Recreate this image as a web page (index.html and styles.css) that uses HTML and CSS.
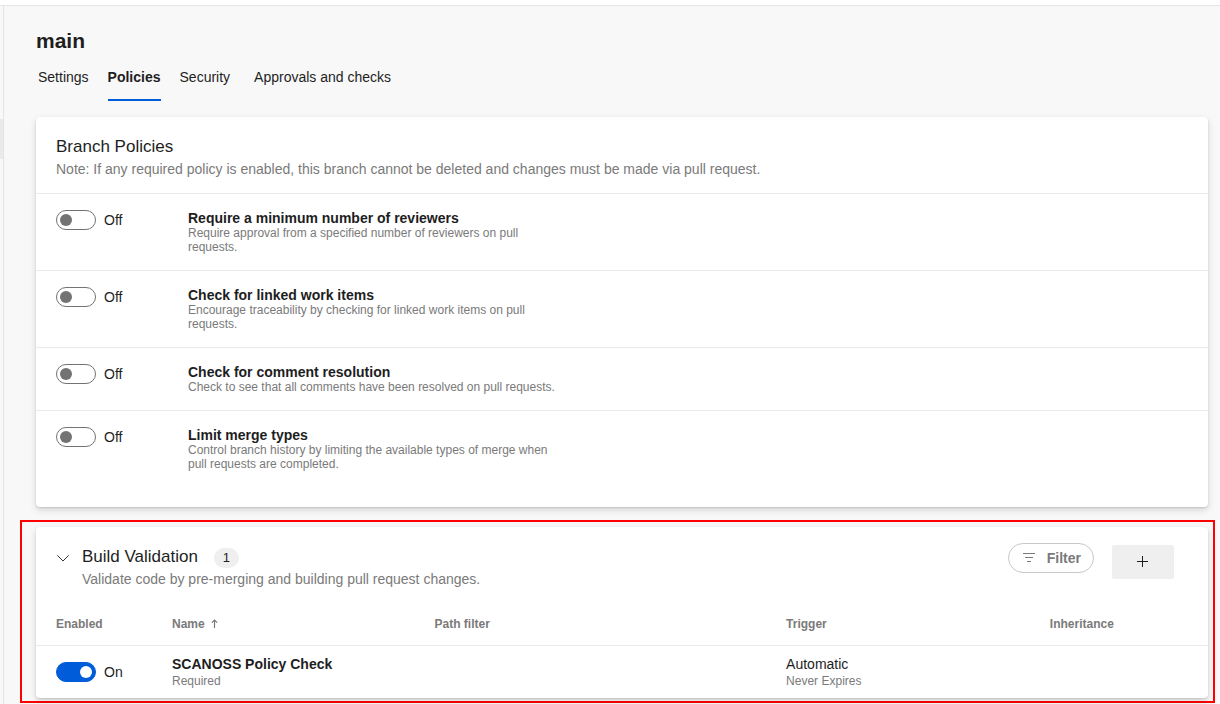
FILE: index.html
```
<!DOCTYPE html>
<html lang="en">
<head>
<meta charset="utf-8">
<title>main - Branch policies</title>
<link rel="stylesheet" href="styles.css">
</head>
<body>
<div class="topbar"></div>
<div class="shell">
  <aside class="rail"><div class="rail-selected"></div></aside>
  <main class="content">
    <h1 class="page-title">main</h1>
    <nav class="tabs">
      <a class="tab" href="#settings">Settings</a>
      <a class="tab tab-active" href="#policies" aria-current="page">Policies</a>
      <a class="tab" href="#security">Security</a>
      <a class="tab tab-last" href="#approvals">Approvals and checks</a>
    </nav>

    <section class="card card-branch">
      <header class="card-header">
        <div>
          <h2 class="card-title">Branch Policies</h2>
          <p class="card-note">Note: If any required policy is enabled, this branch cannot be deleted and changes must be made via pull request.</p>
        </div>
      </header>
      <div class="policy">
        <label class="switch"><input class="toggle" type="checkbox" role="switch" aria-describedby="p1"><span>Off</span></label>
        <div class="policy-text">
          <h3 class="item-title" id="p1">Require a minimum number of reviewers</h3>
          <p class="policy-note">Require approval from a specified number of reviewers on pull requests.</p>
        </div>
      </div>
      <div class="policy">
        <label class="switch"><input class="toggle" type="checkbox" role="switch" aria-describedby="p2"><span>Off</span></label>
        <div class="policy-text">
          <h3 class="item-title" id="p2">Check for linked work items</h3>
          <p class="policy-note">Encourage traceability by checking for linked work items on pull requests.</p>
        </div>
      </div>
      <div class="policy">
        <label class="switch"><input class="toggle" type="checkbox" role="switch" aria-describedby="p3"><span>Off</span></label>
        <div class="policy-text">
          <h3 class="item-title" id="p3">Check for comment resolution</h3>
          <p class="policy-note">Check to see that all comments have been resolved on pull requests.</p>
        </div>
      </div>
      <div class="policy">
        <label class="switch"><input class="toggle" type="checkbox" role="switch" aria-describedby="p4"><span>Off</span></label>
        <div class="policy-text">
          <h3 class="item-title" id="p4">Limit merge types</h3>
          <p class="policy-note">Control branch history by limiting the available types of merge when pull requests are completed.</p>
        </div>
      </div>
    </section>

    <div class="highlight">
      <section class="card">
        <header class="card-header">
          <button class="collapse" type="button" aria-label="Collapse Build Validation" aria-expanded="true">
            <svg width="14" height="14" viewBox="0 0 14 14" fill="none" stroke="currentColor"><path d="M1.300 4.300 7 10l5.700-5.700"/></svg>
          </button>
          <div class="header-text">
            <div class="title-line">
              <h2 class="card-title">Build Validation</h2>
              <span class="count">1</span>
            </div>
            <p class="card-note">Validate code by pre-merging and building pull request changes.</p>
          </div>
          <div class="actions">
            <button class="filter" type="button">
              <svg width="12" height="10" viewBox="0 0 12 10" fill="none" stroke="currentColor"><path d="M0 .5h12M2 4.500h8M4 8.500h4"/></svg>
              <span>Filter</span>
            </button>
            <button class="add" type="button" aria-label="Add build policy">
              <svg width="11" height="11" viewBox="0 0 11 11" fill="none" stroke="currentColor"><path d="M0 5.500h11M5.500 0v11"/></svg>
            </button>
          </div>
        </header>
        <table class="builds">
          <colgroup><col class="c-enabled"><col class="c-name"><col class="c-path"><col class="c-trigger"><col></colgroup>
          <thead>
            <tr>
              <th scope="col">Enabled</th>
              <th scope="col" aria-sort="ascending"><span class="sorted">Name
                <svg width="7" height="10" viewBox="0 0 7 10" fill="none" stroke="currentColor" stroke-width="1.200"><path d="M3.500 9V1M.8 3.700l2.700-2.700 2.700 2.700"/></svg></span></th>
              <th scope="col">Path filter</th>
              <th scope="col">Trigger</th>
              <th scope="col">Inheritance</th>
            </tr>
          </thead>
          <tbody>
            <tr>
              <td class="cell-switch"><label class="switch"><input class="toggle" type="checkbox" role="switch" checked><span>On</span></label></td>
              <td><div class="item-title">SCANOSS Policy Check</div><div class="cell-note">Required</div></td>
              <td></td>
              <td><div class="cell-text">Automatic</div><div class="cell-note">Never Expires</div></td>
              <td></td>
            </tr>
          </tbody>
        </table>
      </section>
    </div>
  </main>
</div>
</body>
</html>
```
FILE: styles.css
```
* {
  box-sizing: border-box;
}

body {
  margin: 0;
  min-height: 100vh;
  display: flex;
  flex-direction: column;
  background: #f8f8f8;
  color: #1e1e1e;
  font: 14px/20px "Liberation Sans", Arial, sans-serif;
}

h1, h2, h3, p {
  margin: 0;
}

button {
  font: inherit;
  cursor: pointer;
}

svg {
  display: block;
}

.topbar {
  height: 6px;
  background: #fff;
  border-bottom: 1px solid #e4e4e4;
}

.shell {
  display: flex;
  flex: 1;
}

.rail {
  width: 4px;
  padding-top: 113px;
  border-right: 1px solid #e4e4e4;
}

.rail-selected {
  height: 40px;
  background: #eaeaea;
}

.content {
  flex: 1;
  min-width: 0;
  padding: 21px 12px 0 32px;
}

.page-title {
  font-size: 21px;
  line-height: 28px;
}

.tabs {
  display: flex;
  gap: 19px;
  padding: 12px 2px 0;
  margin-bottom: 16px;
}

.tab {
  padding-bottom: 12px;
  border-bottom: 2px solid transparent;
  color: inherit;
  text-decoration: none;
}

.tab-active {
  font-weight: 700;
  border-color: #005cd9;
}

.tab-last {
  margin-left: 5px;
}

.card {
  background: #fff;
  border-radius: 4px;
  box-shadow: 0 3px 7px rgba(0, 0, 0, .14), 0 1px 2px rgba(0, 0, 0, .12);
}

.card-branch {
  padding-bottom: 20px;
}

.card-header {
  display: flex;
  padding: 19px 20px 13px;
}

.card-title {
  font-size: 17px;
  line-height: 22px;
  font-weight: 400;
}

.card-note {
  line-height: 22px;
  color: #7a7a7a;
}

.policy {
  display: flex;
  padding: 16px 20px;
  border-top: 1px solid #eaeaea;
}

.policy .switch {
  width: 132px;
}

.policy-text {
  max-width: 372px;
}

.item-title {
  font-size: 14px;
  line-height: 16px;
  font-weight: 700;
}

.policy-note {
  font-size: 12px;
  line-height: 14px;
  color: #7a7a7a;
}

.switch {
  display: flex;
  align-items: flex-start;
  gap: 8px;
}

.toggle {
  appearance: none;
  display: flex;
  flex: none;
  align-items: center;
  width: 40px;
  height: 20px;
  margin: 0;
  padding: 0 3px;
  border: 1px solid #737373;
  border-radius: 10px;
  background: #fff;
}

.toggle::before {
  content: "";
  width: 12px;
  height: 12px;
  border-radius: 50%;
  background: #737373;
}

.toggle:checked {
  justify-content: flex-end;
  border-color: #005cd9;
  background: #005cd9;
}

.toggle:checked::before {
  background: #fff;
}

.highlight {
  margin: 13px -7px 0 -16px;
  padding: 5px 5px 3px 14px;
  border: 2px solid #f00;
}

.collapse {
  align-self: flex-start;
  margin: 5px 12px 0 0;
  padding: 0;
  border: 0;
  background: none;
  color: #333;
}

.header-text {
  flex: 1;
}

.title-line {
  display: flex;
  gap: 16px;
  height: 22px;
}

.count {
  width: 25px;
  height: 20px;
  margin-top: 2px;
  border-radius: 10px;
  background: #efefef;
  font-size: 13px;
  text-align: center;
}

.actions {
  display: flex;
  align-items: flex-start;
  gap: 18px;
  height: 44px;
  padding-right: 14px;
}

.filter {
  display: flex;
  align-items: center;
  gap: 12px;
  height: 30px;
  margin-top: -3px;
  padding: 0 12px 0 14px;
  border: 1px solid #c8c8c8;
  border-radius: 15px;
  background: #fff;
  color: #7a7a7a;
  font-weight: 700;
}

.add {
  display: flex;
  align-items: center;
  justify-content: center;
  width: 62px;
  height: 34px;
  margin-top: -1px;
  padding: 0 1px 1px 0;
  border: 0;
  border-radius: 2px;
  background: #efefef;
  color: #1e1e1e;
}

.builds {
  width: 100%;
  table-layout: fixed;
  border-collapse: separate;
  border-spacing: 0;
}

.c-enabled {
  width: 136px;
}

.c-name {
  width: 22.4%;
}

.c-trigger {
  width: 22.5%;
}

.c-path {
  width: 30%;
}

.builds th {
  height: 43px;
  padding: 0;
  border-bottom: 1px solid #eaeaea;
  font-size: 12px;
  line-height: 16px;
  text-align: left;
  color: #7a7a7a;
}

.builds td {
  padding: 10px 0 8px;
  vertical-align: top;
}

.builds .cell-switch {
  padding-top: 16px;
}

.builds th:first-child,
.builds td:first-child {
  padding-left: 20px;
}

.sorted {
  display: flex;
  align-items: center;
  gap: 6px;
}

.cell-text {
  line-height: 16px;
}

.cell-note {
  font-size: 12px;
  line-height: 18px;
  color: #7a7a7a;
}
```
